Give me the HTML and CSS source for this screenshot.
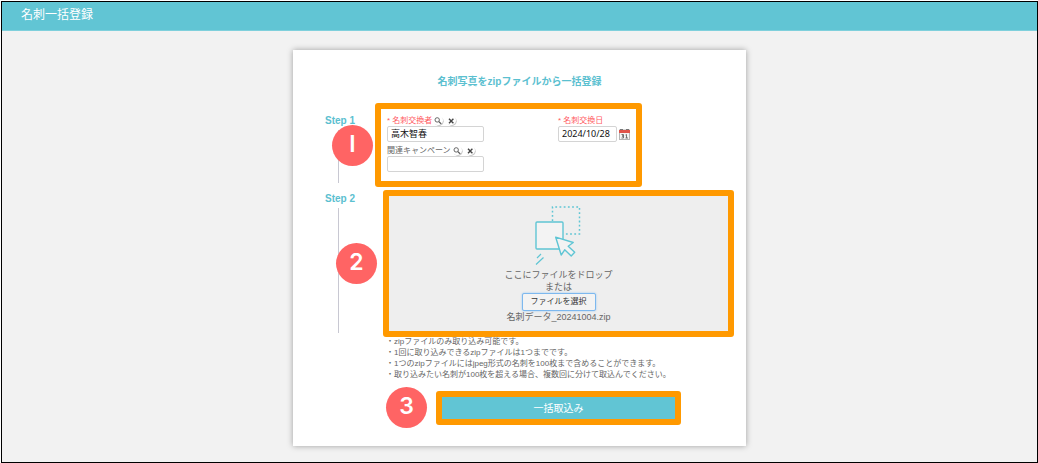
FILE: index.html
```html
<!DOCTYPE html>
<html lang="ja">
<head>
<meta charset="utf-8">
<meta name="viewport" content="width=device-width, initial-scale=1">
<title>名刺一括登録</title>
<link rel="stylesheet" href="styles.css">
</head>
<body>
<svg class="sprite" aria-hidden="true">
  <symbol id="search" viewBox="0 0 12 12">
    <circle cx="6" cy="6.300" r="4.700" fill="#c8c8c8"/>
    <circle cx="5" cy="5.300" r="5" fill="#fff"/>
    <circle cx="4.200" cy="4.900" r="2.200" fill="#fff" stroke="#666" stroke-width="1"/>
    <path d="M5.900 6.600l2.300 2.300" stroke="#555" stroke-width="1.300"/>
  </symbol>
  <symbol id="clear" viewBox="0 0 12 12">
    <circle cx="6" cy="6.300" r="4.700" fill="#c8c8c8"/>
    <circle cx="5" cy="5.300" r="5" fill="#fff"/>
    <path d="M3 3.800l4.400 4.400M7.400 3.800L3 8.200" stroke="#444" stroke-width="1.400"/>
  </symbol>
</svg>
<div class="frame">
  <header class="topbar"><h1 class="topbar-title">名刺一括登録</h1></header>
  <main class="page">
    <form class="card">
      <h2 class="card-title">名刺写真をzipファイルから一括登録</h2>
      <section class="step">
        <div class="rail rail-first">
          <h3 class="step-label">Step 1</h3>
          <span class="rail-line"></span>
          <span class="badge badge-one">I</span>
        </div>
        <div class="highlight fields">
          <div class="field">
            <div class="field-head">
              <label class="field-label required" for="owner">* 名刺交換者</label>
              <button class="icon-button" type="button" aria-label="検索"><svg class="mini"><use href="#search"/></svg></button>
              <button class="icon-button" type="button" aria-label="クリア"><svg class="mini"><use href="#clear"/></svg></button>
            </div>
            <input class="text-input" id="owner" type="text" value="高木智春">
          </div>
          <div class="field">
            <div class="field-head"><label class="field-label required" for="date">* 名刺交換日</label></div>
            <div class="date-row">
              <input class="text-input date-input" id="date" type="text" value="2024/10/28">
              <button class="icon-button" type="button" aria-label="カレンダー">
                <svg class="calendar" viewBox="0 0 11 11">
                  <rect x=".5" y="1" width="10" height="9.500" fill="#f4f4f4" stroke="#b5b5b5"/>
                  <path d="M0 1h11v3H0z" fill="#e0544a"/>
                  <path d="M1 .5h3M7 .5h3" stroke="#777"/>
                  <path d="M2.500 5.500h2v1.500h-1.500h1.500v2h-2M6.500 6l1-.5v3.500M6.500 9h2.500" fill="none" stroke="#666" stroke-width=".9"/>
                </svg>
              </button>
            </div>
          </div>
          <div class="field">
            <div class="field-head">
              <label class="field-label" for="campaign">関連キャンペーン</label>
              <button class="icon-button" type="button" aria-label="検索"><svg class="mini"><use href="#search"/></svg></button>
              <button class="icon-button" type="button" aria-label="クリア"><svg class="mini"><use href="#clear"/></svg></button>
            </div>
            <input class="text-input" id="campaign" type="text">
          </div>
        </div>
      </section>
      <section class="step">
        <div class="rail">
          <h3 class="step-label">Step 2</h3>
          <span class="rail-line"></span>
          <span class="badge badge-two">2</span>
        </div>
        <div class="highlight dropzone">
          <svg class="drop-icon" viewBox="1 0 46 60" fill="none" stroke="#5fc5d4">
            <path d="M17.500 15V1H44.500V28H30" stroke-width="1.500" stroke-dasharray="1.800 2.400"/>
            <rect x="1" y="16" width="27" height="27" rx="1" fill="#f3f3f3" stroke-width="1.400"/>
            <path d="M20.700 31.200l17.500 5.300-5 3.700 6.500 6-3.500 3.800-6.500-6.200-3.500 5.200z" fill="#f3f3f3" stroke-width="1.400" stroke-linejoin="round"/>
            <path d="M2 52l4-4M1 58.500l7.500-7" stroke-width="1.200"/>
          </svg>
          <p class="drop-text">ここにファイルをドロップ</p>
          <p class="drop-text">または</p>
          <button class="file-button" type="button">ファイルを選択</button>
          <p class="file-name">名刺データ_20241004.zip</p>
        </div>
      </section>
      <ul class="notes">
        <li>・zipファイルのみ取り込み可能です。</li>
        <li>・1回に取り込みできるzipファイルは1つまでです。</li>
        <li>・1つのzipファイルにはjpeg形式の名刺を100枚まで含めることができます。</li>
        <li>・取り込みたい名刺が100枚を超える場合、複数回に分けて取込んでください。</li>
      </ul>
      <div class="actions">
        <span class="badge">3</span>
        <div class="highlight action-box"><button class="submit" type="submit">一括取込み</button></div>
      </div>
    </form>
  </main>
</div>
</body>
</html>
```

FILE: styles.css
```css
* { box-sizing: border-box; }

body {
  display: flex;
  min-height: 100vh;
  margin: 0;
  padding: 1px 0 0 1px;
  background: #fff;
  color: #666;
  font-family: "Liberation Sans", "Noto Sans CJK JP", sans-serif;
}

h1, h2, h3, p, ul { margin: 0; padding: 0; }
button, input { font-family: inherit; }

.sprite { position: absolute; width: 0; height: 0; }

.frame {
  flex: 1;
  border: 1px solid #000;
  background: #f2f2f2;
}

.topbar {
  padding: 4px 19px 6px;
  border-bottom: 1px solid #7fd0dc;
  background: #61c5d4;
}

.topbar-title {
  color: #fff;
  font-size: 12px;
  font-weight: 400;
  line-height: 18px;
}

.page {
  display: flex;
  justify-content: center;
  padding: 19px 0 15px;
}

.card {
  width: 100%;
  max-width: 453px;
  padding: 24px 12px 18px 32px;
  background: #fff;
  box-shadow: 0 0 6px rgba(0, 0, 0, .35);
}

.card-title {
  margin: 0 0 13px -20px;
  color: #5bc0d0;
  font-size: 10px;
  line-height: 16px;
  text-align: center;
}

.step {
  display: grid;
  grid-template-columns: 50px 1fr;
  margin-bottom: 3px;
}

.rail {
  position: relative;
  display: flex;
  flex-direction: column;
  padding: 3px 0 4px;
}

.rail-first { padding-top: 12px; }

.step-label {
  color: #5bc0d0;
  font-size: 10px;
  line-height: 12px;
}

.rail-line {
  flex: 1;
  width: 1px;
  margin: 3px 0 0 13px;
  background: #c8c8d2;
}

.badge {
  display: flex;
  align-items: center;
  justify-content: center;
  flex: none;
  width: 41px;
  height: 41px;
  padding-bottom: 3px;
  border-radius: 50%;
  background: #ff6464;
  color: #fff;
  font-family: Inter, sans-serif;
  font-size: 23px;
  font-weight: 600;
  line-height: 1;
}

.badge-one { position: absolute; top: 22px; left: 7px; }
.badge-two { position: absolute; top: 53px; left: 11px; }

.highlight {
  border: 6px solid #ff9900;
  border-radius: 3px;
}

.fields {
  display: grid;
  grid-template-columns: 97px auto;
  gap: 4px 74px;
  justify-self: start;
  padding: 7px 6px 9px;
}

.field-head {
  display: flex;
  align-items: center;
  gap: 1px;
  height: 10px;
}

.field-label {
  font-size: 8px;
  line-height: 12px;
  white-space: nowrap;
}

.required { color: #ff5a5f; }

.icon-button {
  display: flex;
  padding: 0;
  border: 0;
  background: none;
}

.mini { width: 12px; height: 12px; }
.calendar { width: 11px; height: 11px; }

.text-input {
  display: block;
  width: 100%;
  height: 16px;
  padding: 0 3px 2px;
  border: 1px solid #d4d4d4;
  border-radius: 2px;
  background: #fff;
  color: #111;
  font-size: 9px;
}

.date-row {
  display: flex;
  align-items: center;
  gap: 2px;
}

.date-input {
  width: 59px;
  font-family: "Noto Sans", sans-serif;
}

.dropzone {
  display: flex;
  flex-direction: column;
  align-items: center;
  margin-left: 8px;
  padding: 10px 0 8px;
  background: #eee;
}

.drop-icon { width: 46px; height: 60px; margin-bottom: 3px; overflow: visible; }

.drop-text { font-size: 9px; line-height: 12px; }

.file-button {
  height: 18px;
  padding: 0 8px;
  border: 1px solid #7db8ee;
  border-radius: 2px;
  background: #f3f3f3;
  box-shadow: 0 0 2px #8cc4f5;
  color: #333;
  font-size: 8px;
  line-height: 14px;
}

.file-name { font-size: 9px; line-height: 12px; }

.notes {
  margin: -4px 0 7px 61px;
  font-size: 8px;
  line-height: 11px;
  list-style: none;
}

.actions {
  display: flex;
  align-items: center;
  gap: 9px;
  padding-left: 61px;
}

.action-box {
  display: flex;
  flex: 0 1 245px;
}

.submit {
  flex: 1;
  padding: 2px 0 0;
  border: 0;
  background: #61c5d4;
  color: #fff;
  font-size: 10px;
  line-height: 20px;
}
```
